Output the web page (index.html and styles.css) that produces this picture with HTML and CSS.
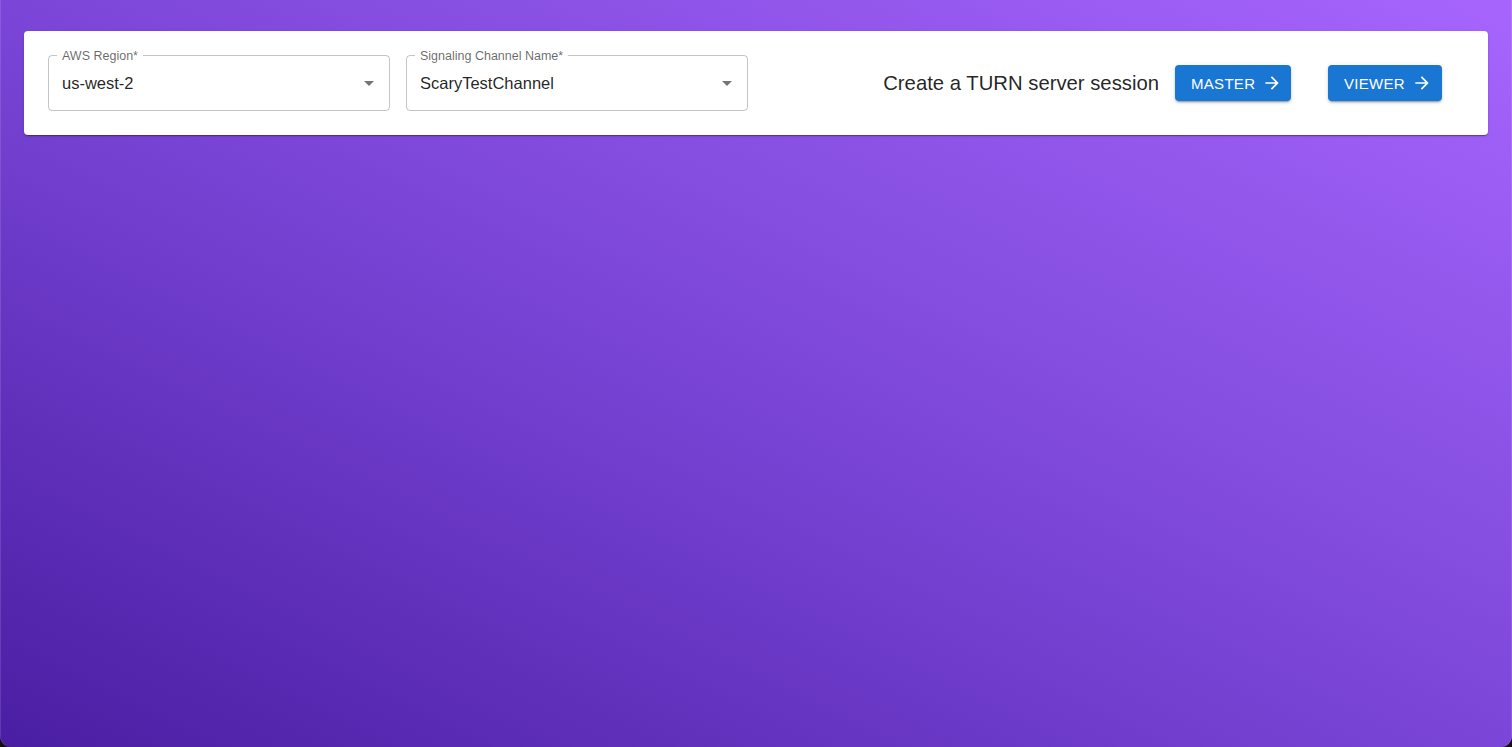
FILE: index.html
```html
<!DOCTYPE html>
<html lang="en">
<head>
<meta charset="utf-8">
<title>TURN session</title>
<link rel="stylesheet" href="styles.css">
</head>
<body>
<div class="window">
  <div class="card">
    <div class="field field-region">
      <fieldset class="outline"><legend><span>AWS Region*</span></legend></fieldset>
      <label class="label">AWS Region*</label>
      <div class="value">us-west-2</div>
      <svg class="caret" viewBox="0 0 24 24" width="24" height="24"><path d="M7 10l5 5 5-5z"/></svg>
    </div>
    <div class="field field-channel">
      <fieldset class="outline"><legend><span>Signaling Channel Name*</span></legend></fieldset>
      <label class="label">Signaling Channel Name*</label>
      <div class="value">ScaryTestChannel</div>
      <svg class="caret" viewBox="0 0 24 24" width="24" height="24"><path d="M7 10l5 5 5-5z"/></svg>
    </div>
    <div class="actions">
      <span class="title">Create a TURN server session</span>
      <button class="btn btn-master">MASTER
        <svg viewBox="0 0 24 24" width="20" height="20"><path d="M12 4l-1.41 1.41L16.17 11H4v2h12.17l-5.58 5.59L12 20l8-8z"/></svg>
      </button>
      <button class="btn btn-viewer">VIEWER
        <svg viewBox="0 0 24 24" width="20" height="20"><path d="M12 4l-1.41 1.41L16.17 11H4v2h12.17l-5.58 5.59L12 20l8-8z"/></svg>
      </button>
    </div>
  </div>
</div>
</body>
</html>
```
FILE: styles.css
```css
html, body {
  margin: 0;
  padding: 0;
  height: 100%;
  background: #111;
}
body {
  font-family: "Liberation Sans", Arial, Helvetica, sans-serif;
}
.window {
  box-sizing: border-box;
  height: 747px;
  padding: 31px 24px 0 24px;
  border-radius: 0 0 11px 11px;
  background: linear-gradient(to top right, #4a1ea3 0%, #7b46d8 50%, #a765fd 100%);
  box-shadow: inset 1px 0 0 rgba(255,255,255,0.12), inset -1px 0 0 rgba(255,255,255,0.12);
}
.card {
  background: #fff;
  border-radius: 4px;
  box-shadow: 0 2px 1px -1px rgba(0,0,0,0.2), 0 1px 1px 0 rgba(0,0,0,0.14), 0 1px 3px 0 rgba(0,0,0,0.12);
  height: 104px;
  box-sizing: border-box;
  padding: 24px 46px 24px 24px;
  display: flex;
  align-items: center;
  gap: 16px;
}
.field {
  position: relative;
  width: 342px;
  height: 56px;
  flex: none;
  align-self: flex-start;
}
.outline {
  position: absolute;
  inset: -5px 0 0 0;
  margin: 0;
  padding: 0 8px;
  border: 1px solid rgba(0,0,0,0.23);
  border-radius: 4px;
  pointer-events: none;
}
.outline legend {
  font-size: 12px;
  padding: 0;
  height: 11px;
  visibility: hidden;
  white-space: nowrap;
}
.outline legend span {
  padding: 0 5px;
  display: inline-block;
  font-size: 12.5px;
}
.label {
  position: absolute;
  left: 14px;
  top: -5px;
  font-size: 12.5px;
  line-height: 1;
  color: rgba(0,0,0,0.6);
  white-space: nowrap;
}
.value {
  position: absolute;
  left: 14px;
  top: 0;
  height: 56px;
  line-height: 56px;
  font-size: 16.5px;
  color: rgba(0,0,0,0.87);
}
.caret {
  position: absolute;
  right: 9px;
  top: 16px;
  fill: rgba(0,0,0,0.54);
}
.actions {
  margin-left: auto;
  display: flex;
  align-items: center;
}
.title {
  font-size: 20.3px;
  color: rgba(0,0,0,0.87);
  margin-right: 16px;
}
.btn {
  display: inline-flex;
  align-items: center;
  justify-content: flex-start;
  height: 36px;
  border: 0;
  border-radius: 4px;
  background: #1976d2;
  color: #fff;
  font-family: "Liberation Sans", Arial, Helvetica, sans-serif;
  font-size: 15px;
  letter-spacing: 0.3px;
  padding: 0 0 0 16px;
  gap: 7px;
  box-shadow: 0 3px 1px -2px rgba(0,0,0,0.2), 0 2px 2px 0 rgba(0,0,0,0.14), 0 1px 5px 0 rgba(0,0,0,0.12);
  cursor: pointer;
}
.btn svg {
  fill: #fff;
  flex: none;
  width: 20px;
  height: 20px;
}
.btn-master {
  width: 116px;
}
.btn-viewer {
  width: 114px;
  margin-left: 37px;
}
```
